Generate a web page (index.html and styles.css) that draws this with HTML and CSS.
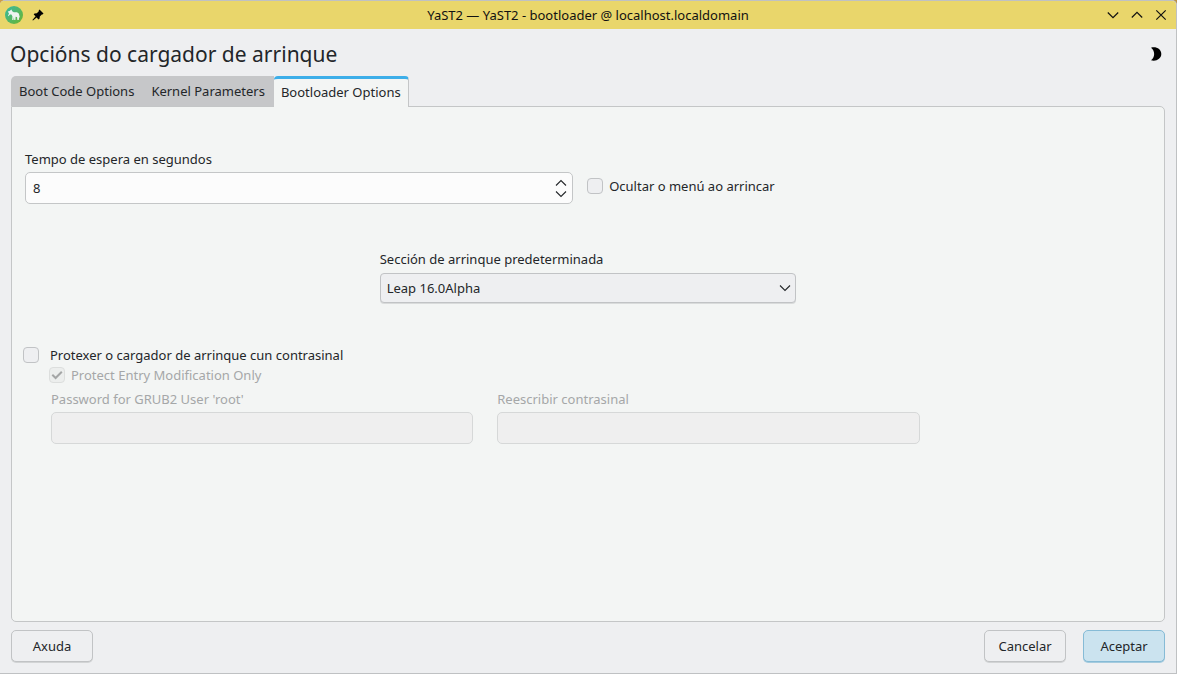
FILE: index.html
```html
<!DOCTYPE html>
<html lang="gl">
<head>
<meta charset="utf-8">
<title>YaST2 - bootloader</title>
<link rel="stylesheet" href="styles.css">
</head>
<body>
<div class="window">
  <header class="titlebar">
    <div class="titlebar-side">
      <svg class="app-icon" viewBox="0 0 18 18" aria-hidden="true">
        <defs><linearGradient id="leaf" x1="0" y1="0" x2="1" y2="1"><stop offset="0" stop-color="#35b9a5"/><stop offset="1" stop-color="#6db52c"/></linearGradient></defs>
        <circle cx="9" cy="9" r="9" fill="url(#leaf)"/>
        <path d="M2.8 5.6 4.6 5 6.4 3.6 7.2 5.2 8.8 6.2 12 6.2 13.8 7.4 14.9 11.4 14.1 11.2 13.8 14 12.4 14 12 11 10.6 10.8 10.4 14 9.2 14 9 11 8.4 14 7.2 14 7.4 10.2 6.4 8.6 5 8.4 3.4 10.2 3 9.8 4 7.6Z" fill="#eef4f0"/>
      </svg>
      <button class="bar-button" aria-label="Fixar">
        <svg class="pin-icon" viewBox="0 0 12 12"><path d="M7.5.5 11.5 4.5 10.5 5.4 9.8 5.4 7.8 7.4 7.6 9.6 6.5 10.4 4.6 8.5 1 11.5.4 11 3.6 7.3 1.7 5.4 2.5 4.4 4.8 4.2 6.8 2.2 6.8 1.3Z" fill="#000"/></svg>
      </button>
    </div>
    <div class="titlebar-text">YaST2 — YaST2 - bootloader @ localhost.localdomain</div>
    <div class="titlebar-side titlebar-end">
      <button class="bar-button" aria-label="Minimizar"><svg class="bar-icon" viewBox="0 0 12 12"><path d="M.8 3.5 6 8.7 11.2 3.5"/></svg></button>
      <button class="bar-button" aria-label="Maximizar"><svg class="bar-icon" viewBox="0 0 12 12"><path d="M.8 8.5 6 3.3 11.2 8.5"/></svg></button>
      <button class="bar-button" aria-label="Pechar"><svg class="bar-icon" viewBox="0 0 12 12"><path d="M1.3 1.3 10.7 10.7M10.7 1.3 1.3 10.7"/></svg></button>
    </div>
  </header>

  <main class="dialog">
    <div class="heading">
      <h1 class="heading-title">Opcións do cargador de arrinque</h1>
      <button class="bar-button" aria-label="Tema">
        <svg class="moon-icon" viewBox="0 0 12 14"><path d="M1 .8C6-.8 11.3 2.2 11.3 7S6 14.8 1 13.2C5.2 10.5 5.2 3.5 1 .8Z" fill="#000"/></svg>
      </button>
    </div>

    <div class="tabs" role="tablist">
      <button class="tab" role="tab">Boot Code Options</button>
      <button class="tab" role="tab">Kernel Parameters</button>
      <button class="tab tab-active" role="tab" aria-selected="true">Bootloader Options</button>
    </div>

    <section class="pane">
      <div class="timeout">
        <div class="field">
          <label class="label" for="timeout">Tempo de espera en segundos</label>
          <div class="spin">
            <input class="spin-input" id="timeout" type="text" inputmode="numeric" value="8">
            <div class="spin-buttons">
              <button class="spin-button" aria-label="Aumentar"><svg class="arrow" viewBox="0 0 12 8"><path d="M1 6.5 6 1.5 11 6.5"/></svg></button>
              <button class="spin-button" aria-label="Diminuír"><svg class="arrow" viewBox="0 0 12 8"><path d="M1 1.5 6 6.5 11 1.5"/></svg></button>
            </div>
          </div>
        </div>
        <div class="option option-hide">
          <input class="check" type="checkbox" id="hide">
          <label class="label" for="hide">Ocultar o menú ao arrincar</label>
        </div>
      </div>

      <div class="section-choice">
        <label class="label" for="section">Sección de arrinque predeterminada</label>
        <div class="combo">
          <select class="combo-select" id="section"><option>Leap 16.0Alpha</option></select>
          <svg class="arrow combo-arrow" viewBox="0 0 12 8" aria-hidden="true"><path d="M1 1.5 6 6.5 11 1.5"/></svg>
        </div>
      </div>

      <div class="protect">
        <div class="option option-protect">
          <input class="check" type="checkbox" id="protect">
          <label class="label" for="protect">Protexer o cargador de arrinque cun contrasinal</label>
        </div>
        <div class="protect-body">
          <div class="option option-disabled">
            <input class="check" type="checkbox" id="entry" checked disabled>
            <label class="label" for="entry">Protect Entry Modification Only</label>
          </div>
          <div class="passwords">
            <div class="field">
              <label class="label" for="password">Password for GRUB2 User 'root'</label>
              <input class="text-input" id="password" type="password" disabled>
            </div>
            <div class="field">
              <label class="label" for="retype">Reescribir contrasinal</label>
              <input class="text-input" id="retype" type="password" disabled>
            </div>
          </div>
        </div>
      </div>
    </section>

    <footer class="actions">
      <button class="button button-help">Axuda</button>
      <button class="button">Cancelar</button>
      <button class="button button-primary">Aceptar</button>
    </footer>
  </main>
</div>
</body>
</html>
```

FILE: styles.css
```css
* { box-sizing: border-box; }

body {
  margin: 0;
  background: linear-gradient(to right, #cf9c45 174px, #bbb 174px 185px, #3c8a35 185px 193px, #b5b5b5 193px 855px, #b99144 855px);
  color: #232629;
  font-family: "Noto Sans", sans-serif;
  font-size: 13px;
  line-height: 18px;
}

button, input, select {
  margin: 0;
  color: inherit;
  font: inherit;
}

.window {
  display: flex;
  flex-direction: column;
  min-height: 100vh;
  border: 1px solid #bfc1c3;
  border-left: 0;
  border-radius: 5px 5px 0 0;
  background: #eeeff1;
}

.titlebar {
  display: grid;
  grid-template-columns: 1fr auto 1fr;
  align-items: center;
  height: 28px;
  padding: 0 9px 0 5px;
  border-radius: 4px 4px 0 0;
  background: #e9d66b;
  color: #111;
}

.titlebar-text { padding-left: 4px; }
.titlebar-side { display: flex; align-items: center; gap: 9px; }
.titlebar-end { justify-content: flex-end; gap: 12px; }

.bar-button {
  display: flex;
  padding: 0;
  border: 0;
  background: none;
}

.app-icon { width: 18px; height: 18px; }
.pin-icon { width: 12px; height: 12px; }
.bar-icon { width: 12px; height: 12px; fill: none; stroke: #111; stroke-width: 1.2; }
.moon-icon { width: 12px; height: 14px; }

.dialog {
  display: flex;
  flex: 1;
  flex-direction: column;
  padding: 7px 11px 11px;
}

.heading {
  display: flex;
  align-items: center;
  justify-content: space-between;
  height: 40px;
  padding: 0 3px 4px 0;
}

.heading-title {
  margin: 0 0 0 -1px;
  font-size: 21px;
  font-weight: 400;
  line-height: 30px;
}

.tabs { display: flex; }

.tab {
  height: 30px;
  padding: 0 9px 0 8px;
  border: 0;
  background: #c6c7c9;
}

.tab:first-child { border-radius: 5px 0 0 0; }

.tab-active {
  z-index: 1;
  height: 31px;
  margin-bottom: -1px;
  padding: 0 7px 3px;
  border-top: 3px solid #3daee9;
  border-right: 1px solid #c4c6c7;
  border-radius: 4px 4px 0 0;
  background: #f3f5f4;
}

.pane {
  flex: 1;
  padding: 43px 13px 20px;
  border: 1px solid #c4c6c7;
  border-radius: 0 5px 5px 5px;
  background: #f3f5f4;
}

.field { display: flex; flex-direction: column; gap: 4px; }

.timeout {
  display: grid;
  grid-template-columns: 35fr 36fr;
  gap: 14px;
}

.spin {
  display: flex;
  height: 32px;
  border: 1px solid #c4c6c7;
  border-radius: 5px;
  background: #fcfcfc;
}

.spin-input {
  flex: 1;
  min-width: 0;
  padding: 0 7px;
  border: 0;
  background: none;
}

.spin-buttons {
  display: flex;
  flex-direction: column;
  justify-content: center;
  gap: 3px;
  padding-right: 5px;
}

.spin-button { display: flex; padding: 0; border: 0; background: none; }
.arrow { width: 12px; height: 8px; fill: none; stroke: #232629; stroke-width: 1.1; }

.option { display: flex; align-items: center; gap: 6px; }
.option-hide { align-self: end; padding-bottom: 9px; }

.check {
  flex: none;
  width: 16px;
  height: 16px;
  appearance: none;
  border: 1px solid #c1c3c5;
  border-radius: 4px;
  background: #eeeff1;
}

.check:disabled {
  border-color: #dcdedd;
  background: #eceeed url("data:image/svg+xml,%3Csvg xmlns='http://www.w3.org/2000/svg' viewBox='0 0 14 14'%3E%3Cpath d='M2.3 6.8 5.6 10 11.8 3.8' fill='none' stroke='%23a4a6a6' stroke-width='2'/%3E%3C/svg%3E") center / 14px 14px;
}

.section-choice {
  display: flex;
  flex-direction: column;
  gap: 5px;
  width: 37%;
  margin: 46px auto 0;
}

.combo { display: grid; align-items: center; }

.combo-select {
  grid-area: 1 / 1;
  width: 100%;
  height: 30px;
  padding: 0 6px;
  appearance: none;
  border: 1px solid #c1c3c5;
  border-radius: 4px;
  background: #eeeff1;
  box-shadow: 0 1px 0 #d9dbdb;
}

.combo-arrow {
  grid-area: 1 / 1;
  justify-self: end;
  margin-right: 5px;
  pointer-events: none;
}

.protect { margin: 43px 0 0 -2px; }
.option-protect { gap: 11px; }
.protect-body { padding: 1px 0 0 26px; }
.option-disabled { height: 20px; }
.option-disabled, .passwords { color: #a5a7a8; }

.passwords {
  display: grid;
  grid-template-columns: 1fr 1fr;
  gap: 24px;
  width: 79%;
  margin-top: 5px;
  padding-left: 2px;
}

.text-input {
  width: 100%;
  height: 32px;
  padding: 0 7px;
  border: 1px solid #d6d8d8;
  border-radius: 5px;
  background: #efefef;
}

.actions {
  display: flex;
  gap: 17px;
  padding-top: 8px;
}

.button {
  min-width: 82px;
  height: 32px;
  padding: 0 13px;
  border: 1px solid #c1c3c5;
  border-radius: 5px;
  background: #eeeff1;
  box-shadow: 0 1px 0 #d2d4d5;
}

.button-help { margin-right: auto; }

.button-primary {
  border-color: #86bbd6;
  background: #cbe3ef;
  box-shadow: 0 1px 0 #a5cbde;
}
```
